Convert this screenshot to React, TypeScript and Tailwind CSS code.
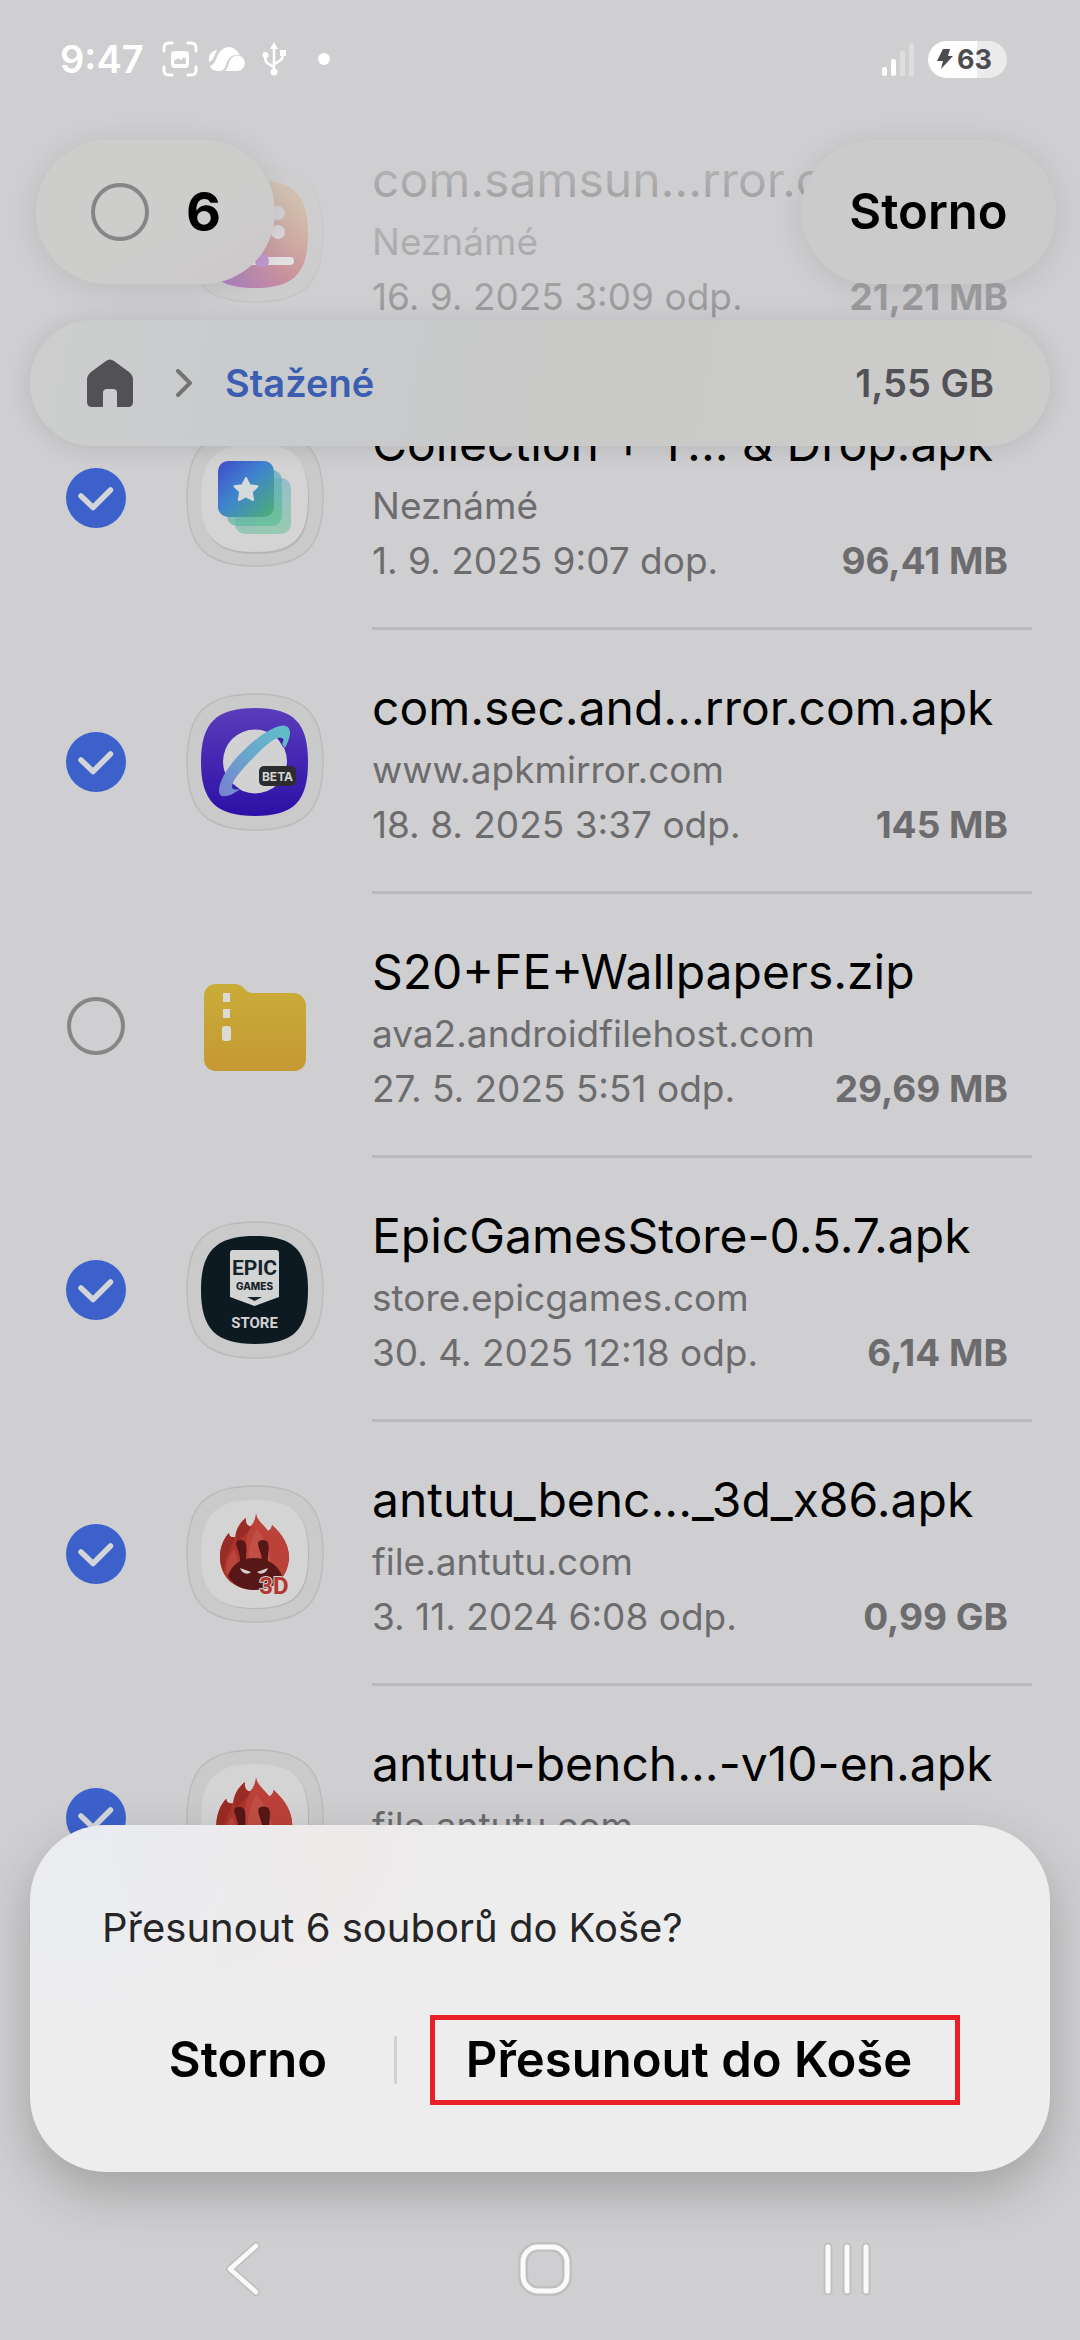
import React, { useState } from 'react';

type IconKind = 'goodlock' | 'collection' | 'browser' | 'zip' | 'epic' | 'antutu3d' | 'antutu';

interface FileItem {
  id: string;
  name: string;
  source: string;
  date: string;
  size: string;
  icon: IconKind;
  selected: boolean;
}

const FILES: FileItem[] = [
  { id: 'goodlock', name: 'com.samsun...rror.com.apk', source: 'Neznámé', date: '16. 9. 2025 3:09 odp.', size: '21,21 MB', icon: 'goodlock', selected: true },
  { id: 'collection', name: 'Collection + T... & Drop.apk', source: 'Neznámé', date: '1. 9. 2025 9:07 dop.', size: '96,41 MB', icon: 'collection', selected: true },
  { id: 'browser', name: 'com.sec.and...rror.com.apk', source: 'www.apkmirror.com', date: '18. 8. 2025 3:37 odp.', size: '145 MB', icon: 'browser', selected: true },
  { id: 'wallpapers', name: 'S20+FE+Wallpapers.zip', source: 'ava2.androidfilehost.com', date: '27. 5. 2025 5:51 odp.', size: '29,69 MB', icon: 'zip', selected: false },
  { id: 'epic', name: 'EpicGamesStore-0.5.7.apk', source: 'store.epicgames.com', date: '30. 4. 2025 12:18 odp.', size: '6,14 MB', icon: 'epic', selected: true },
  { id: 'antutu3d', name: 'antutu_benc..._3d_x86.apk', source: 'file.antutu.com', date: '3. 11. 2024 6:08 odp.', size: '0,99 GB', icon: 'antutu3d', selected: true },
  { id: 'antutu', name: 'antutu-bench...-v10-en.apk', source: 'file.antutu.com', date: '3. 11. 2024 6:05 odp.', size: '112 MB', icon: 'antutu', selected: true },
];

const OUTER = 'M69 1C118 1 137 20 137 69C137 118 118 137 69 137C20 137 1 118 1 69C1 20 20 1 69 1Z';
const INNER = 'M69 15C108 15 122 30 122 69C122 108 108 123 69 123C30 123 15 108 15 69C15 30 30 15 69 15Z';

function Flame() {
  return (
    <g>
      <path d="M70 28C70 35 78 40 82 46C84 45 86 43 86 40C97 50 103 60 103 73C102 93 88 105 69 105C49 105 34 93 34 72C34 62 38 53 43 48C43 51 45 53 49 52C50 44 54 37 60 33C59 38 62 42 65 41C68 38 70 33 70 28Z" fill="#ab342c" />
      <path d="M70 28C70 35 78 40 82 46C84 45 86 43 86 40C97 50 103 60 103 73C102 84 97 92 90 98L60 80C56 66 60 52 65 41C68 38 70 33 70 28Z" fill="#bb4139" />
      <path d="M43 48C43 51 45 53 49 52C46 62 38 72 38 86C35 82 34 77 34 72C34 62 38 53 43 48ZM60 33C59 38 62 42 65 41C63 48 56 51 52 57C48 49 53 38 60 33Z" fill="#992c25" />
      <path d="M70 44C76 50 82 58 84 70C85 76 84 80 82 82L64 78C60 66 66 54 70 44Z" fill="#c24f45" />
      <path d="M48 64C52 70 53 76 50 82L41 90C38 82 42 72 48 64Z" fill="#b9463c" />
      <path d="M50 58C51 54 59 54 60 59C61 65 60 70 60 77L54 79C55 69 51 64 50 58ZM72 58C73 54 81 54 82 58C84 64 81 70 82 79L76 77C76 68 72 64 72 58Z" fill="#571717" />
      <path d="M68 73C82 73 92 80 96 91C92 100 81 105 69 105C57 105 47 100 42 91C45 81 54 73 68 73Z" fill="#571717" />
      <path d="M54 83L65 87C62 90 56 89 54 83ZM82 83L71 87C74 90 80 89 82 83Z" fill="#d5cfcf" />
    </g>
  );
}

function FileIcon({ kind }: { kind: IconKind }) {
  if (kind === 'zip') {
    return (
      <svg viewBox="0 0 138 138" className="size-[138px] shrink-0" aria-hidden="true">
        <defs>
          <linearGradient id="zip" x1="0" y1="0" x2="0" y2="1">
            <stop offset="0" stopColor="#caac39" />
            <stop offset="1" stopColor="#c49933" />
          </linearGradient>
        </defs>
        <path d="M30 27H49C58 27 59 36 66 36H107C115 36 120 42 120 49V102C120 109 115 114 108 114H30C23 114 18 109 18 102V39C18 32 23 27 30 27Z" fill="url(#zip)" />
        <path d="M37 36H44V45H37ZM37 52H44V61H37Z" fill="#dadad6" />
        <rect x="36" y="69" width="9" height="15" rx="3" fill="#dadad6" />
      </svg>
    );
  }

  return (
    <svg viewBox="0 0 138 138" className="size-[138px] shrink-0" aria-hidden="true">
      <path d={OUTER} fill="#cacaca" stroke="#bbbbbc" strokeWidth="1.5" />
      {kind === 'goodlock' && (
        <g>
          <defs>
            <linearGradient id="goodlock" x1="0.1" y1="1" x2="0.9" y2="0.2">
              <stop offset="0" stopColor="#7d22cc" />
              <stop offset="0.5" stopColor="#c0405a" />
              <stop offset="1" stopColor="#d98a3a" />
            </linearGradient>
          </defs>
          <path d={INNER} fill="url(#goodlock)" />
          <circle cx="92" cy="48" r="7" fill="#e4dcdc" />
          <circle cx="92" cy="67" r="7" fill="#f4eeee" />
          <path d="M40 96H104" stroke="#ffffff" strokeWidth="8" strokeLinecap="round" />
          <circle cx="76" cy="96" r="7" fill="#b04ad0" />
        </g>
      )}
      {kind === 'collection' && (
        <g>
          <defs>
            <linearGradient id="stack" x1="0" y1="0" x2="1" y2="1">
              <stop offset="0" stopColor="#424bcb" />
              <stop offset="0.45" stopColor="#3f84cf" />
              <stop offset="1" stopColor="#4db070" />
            </linearGradient>
            <linearGradient id="stackBack" x1="0.3" y1="0" x2="0.7" y2="1">
              <stop offset="0" stopColor="#5b9fd0" />
              <stop offset="1" stopColor="#5bbf8f" />
            </linearGradient>
          </defs>
          <path d={INNER} transform="translate(1 2)" fill="#b5b5b5" />
          <path d={INNER} fill="#d4d4d4" />
          <rect x="49" y="49" width="56" height="56" rx="10" fill="url(#stackBack)" opacity="0.5" />
          <rect x="41" y="41" width="55" height="56" rx="10" fill="url(#stackBack)" opacity="0.7" />
          <rect x="32" y="32" width="56" height="56" rx="10" fill="url(#stack)" />
          <path d="M60 49L63.6 56.2L71.5 57.3L65.8 62.9L67.1 71L60 67.3L52.9 71L54.2 62.9L48.5 57.3L56.4 56.2Z" fill="#d5dadb" stroke="#d5dadb" strokeWidth="2" strokeLinejoin="round" />
        </g>
      )}
      {kind === 'browser' && (
        <g>
          <defs>
            <linearGradient id="browser" x1="0" y1="0" x2="0" y2="1">
              <stop offset="0" stopColor="#5a3cbb" />
              <stop offset="1" stopColor="#2c10a6" />
            </linearGradient>
            <linearGradient id="ring" x1="1" y1="0" x2="0" y2="1">
              <stop offset="0" stopColor="#5fc0c9" />
              <stop offset="0.5" stopColor="#6aa6cd" />
              <stop offset="1" stopColor="#7680cf" />
            </linearGradient>
          </defs>
          <path d={INNER} fill="url(#browser)" />
          <circle cx="69" cy="68.5" r="32" fill="#d2d2d3" />
          <path d="M91 44L97 54L99 45ZM46 90L56 98L46 98Z" fill="#3d22ae" />
          <path d="M33 98C33 86 46 68 58 57C72 43 88 33 97 32.5C106 33 106 42 99 55L96 51C99 46 97 44 92 45C84 47 72 60 64 68C54 79 46 88 46 94C46 97 51 97 54 96C46 103 33 107 33 98Z" fill="url(#ring)" />
          <rect x="73" y="73" width="37" height="20" rx="5" fill="#2d2d2f" />
          <text x="91.5" y="87.5" textAnchor="middle" fontFamily="Inter, sans-serif" fontWeight="700" fontSize="12" fill="#d6d6d6">BETA</text>
        </g>
      )}
      {kind === 'epic' && (
        <g>
          <path d={INNER} fill="#0e1a22" />
          <path d="M47 29H90Q93 29 93 32V76L68.500 85L44 76V32Q44 29 47 29Z" fill="#d2d3d3" />
          <text x="68.500" y="54" textAnchor="middle" fontFamily="'Liberation Sans Narrow', 'Roboto', sans-serif" fontWeight="700" fontSize="21" fill="#17232b">EPIC</text>
          <text x="68.500" y="69" textAnchor="middle" fontFamily="Inter, sans-serif" fontWeight="800" fontSize="10" fill="#17232b">GAMES</text>
          <path d="M61 76H76L68.500 80Z" fill="#17232b" />
          <text x="68.500" y="107" textAnchor="middle" fontFamily="'Liberation Sans Narrow', 'Roboto', sans-serif" fontWeight="700" fontSize="15" fill="#d2d3d3">STORE</text>
        </g>
      )}
      {(kind === 'antutu3d' || kind === 'antutu') && (
        <g>
          <path d={INNER} transform="translate(1 1)" fill="#b5b5b5" />
          <path d={INNER} fill="#d4d4d4" />
          {kind === 'antutu3d' ? (
            <g>
              <Flame />
              <text x="88" y="109" textAnchor="middle" fontFamily="'Roboto', sans-serif" fontWeight="700" fontSize="24" fill="#b5362e" stroke="#d4d4d4" strokeWidth="2" paintOrder="stroke">3D</text>
            </g>
          ) : (
            <g transform="translate(-7 -3) scale(1.1)">
              <Flame />
            </g>
          )}
        </g>
      )}
    </svg>
  );
}

function RoundCheckbox({ label, checked, onChange }: { label: string; checked: boolean; onChange: () => void }) {
  return (
    <label className="grid size-[60px] shrink-0 place-items-center">
      <input
        type="checkbox"
        aria-label={label}
        checked={checked}
        onChange={onChange}
        className="col-start-1 row-start-1 size-[58px] appearance-none rounded-full border-4 border-[#868687] checked:size-[60px] checked:border-0 checked:bg-[#3c61ca]"
      />
      {checked && (
        <svg viewBox="0 0 60 60" className="pointer-events-none col-start-1 row-start-1 size-[60px]" fill="none" aria-hidden="true">
          <path d="M15 28L27 39.500L44.500 22" stroke="#d3d5da" strokeWidth="5.5" strokeLinecap="round" strokeLinejoin="round" />
        </svg>
      )}
    </label>
  );
}

function StatusBar() {
  return (
    <div className="flex h-[118px] items-center justify-between pr-[73px] pl-[60px] text-white">
      <div className="flex items-center">
        <span className="text-[38px] leading-none font-semibold">9:47</span>
        <svg viewBox="0 0 36 36" className="ml-[18px] size-9" fill="none" aria-hidden="true">
          <path d="M2 10V7Q2 2 7 2H10M26 2H29Q34 2 34 7V10M34 26V29Q34 34 29 34H26M10 34H7Q2 34 2 29V26" stroke="white" strokeWidth="3" strokeLinecap="round" />
          <rect x="9" y="10" width="18" height="17" rx="4" fill="white" />
          <path d="M12 23V20L16 17L19 19L22 16L24 18V23Z" fill="#cfcfd1" />
        </svg>
        <svg viewBox="0 0 38 26" className="ml-[10px] h-[26px] w-[38px]" aria-hidden="true">
          <path d="M1 16C0 9 3 5 9 4L5 13Q3 16 1 16Z" fill="white" />
          <path d="M2 20C8 18 8 11 11 7C15 0 23 -1 28 4C30 6 31 8 32 9C24 8 20 12 18 19Q16 25 12 25C6 25 3 24 2 20Z" fill="white" />
          <path d="M17 25C20 23 20 18 22 14C25 9 31 8 35 12C39 17 36 25 29 25Z" fill="white" />
        </svg>
        <svg viewBox="0 0 24 34" className="ml-4 h-[34px] w-6" fill="none" aria-hidden="true">
          <path d="M12 6V30M12 25C4 21 3 20 3 13M12 22C20 18 21 17 21 10" stroke="white" strokeWidth="2.500" />
          <path d="M12 0L16 7H8Z" fill="white" />
          <circle cx="12" cy="30" r="3.500" fill="white" />
          <circle cx="3.500" cy="13" r="3" fill="white" />
          <rect x="18" y="8" width="6" height="6" fill="white" />
        </svg>
        <span className="ml-8 size-3 rounded-full bg-white" />
      </div>
      <div className="flex items-center gap-[14px]">
        <div className="flex h-[34px] items-end gap-1">
          <span className="h-[9px] w-[5px] rounded-full bg-white" />
          <span className="h-[17px] w-[5px] rounded-full bg-white" />
          <span className="h-[25px] w-[5px] rounded-full bg-[#dededf]" />
          <span className="h-[33px] w-[5px] rounded-full bg-[#dededf]" />
        </div>
        <div className="flex h-[37px] w-[79px] items-center gap-1 rounded-full bg-linear-to-r from-white from-62% to-[#ebebeb] to-62% pl-[9px] text-[#4c4c50]">
          <svg viewBox="0 0 16 20" className="h-5 w-4" aria-hidden="true">
            <path d="M6 0H13L11 7H16L4 20L6 12H0Z" fill="currentColor" />
          </svg>
          <span className="text-[27px] leading-none font-bold">63</span>
        </div>
      </div>
    </div>
  );
}

export default function App() {
  const [files, setFiles] = useState(FILES);
  const count = files.filter(f => f.selected).length;
  const allSelected = count === files.length;

  const toggle = (id: string) => {
    setFiles(files.map(f => (f.id === id ? { ...f, selected: !f.selected } : f)));
  };

  return (
    <div className="relative min-h-screen overflow-hidden bg-[#cfcfd1] font-['Inter','Noto_Sans',sans-serif] text-black">
      <ul className="pt-[102px]">
        {files.map(file => (
          <li key={file.id} className="flex h-[264px] pr-12 pl-[66px]">
            <div className="flex items-center gap-[60px] pr-12">
              <RoundCheckbox label={file.name} checked={file.selected} onChange={() => toggle(file.id)} />
              <FileIcon kind={file.icon} />
            </div>
            <div className="min-w-0 flex-1 border-b-[3px] border-[#b9b9bb] pt-12 pr-6 text-[37px] leading-[55px] whitespace-nowrap text-[#6c6c6e]">
              <p className="mb-1 text-[48px] leading-[60px] text-black">{file.name}</p>
              <p>{file.source}</p>
              <div className="flex justify-between">
                <span>{file.date}</span>
                <span className="font-bold">{file.size}</span>
              </div>
            </div>
          </li>
        ))}
      </ul>

      {/* Floating header over the scrolled list */}
      <header className="absolute inset-x-0 top-0 bg-[linear-gradient(to_bottom,#cfcfd1_22%,#cfcfd1d6_40%,#cfcfd180_67%,#cfcfd100_100%)]">
        <StatusBar />
        <div className="mt-[22px] flex justify-between pr-6 pl-9">
          <div className="flex h-36 w-[239px] items-center gap-9 rounded-full bg-linear-to-br from-[#cdcdcc] from-60% to-[#cdc8cb] pl-[54px] shadow-[0_4px_30px_rgba(0,0,0,0.1)]">
            <RoundCheckbox
              label="Vybrat vše"
              checked={allSelected}
              onChange={() => setFiles(files.map(f => ({ ...f, selected: !allSelected })))}
            />
            <span className="text-[54px] leading-none font-bold">{count}</span>
          </div>
          <button className="h-36 w-[255px] rounded-full bg-[#cbcbcb] text-[49px] font-semibold shadow-[0_4px_30px_rgba(0,0,0,0.1)]">
            Storno
          </button>
        </div>
        <nav className="mx-[30px] mt-9 flex h-[126px] items-center rounded-full bg-[linear-gradient(100deg,#cdcecd_0%,#c8cbce_25%,#c9c9c8_50%,#cccccb_100%)] pr-14 pl-[57px] text-[38px] shadow-[0_2px_24px_rgba(0,0,0,0.12)]">
          <a href="#home" aria-label="Domů">
            <svg viewBox="0 0 46 48" className="h-12 w-[46px]" aria-hidden="true">
              <path d="M19 2Q23 -1 27 2L42 13Q46 16 46 21V43Q46 48 41 48H30V34Q30 30 26 30H20Q16 30 16 34V48H5Q0 48 0 43V21Q0 16 4 13Z" fill="#525156" />
            </svg>
          </a>
          <svg viewBox="0 0 18 28" className="mr-[32px] ml-[42px] h-7 w-[18px]" fill="none" aria-hidden="true">
            <path d="M3 2L15 14L3 26" stroke="#747475" strokeWidth="4" strokeLinecap="round" strokeLinejoin="round" />
          </svg>
          <a href="#downloads" className="font-semibold text-[#3b5db2]">Stažené</a>
          <span className="ml-auto font-semibold text-[#525156]">1,55 GB</span>
        </nav>
      </header>

      <div className="absolute inset-x-0 bottom-0">
        <section
          role="dialog"
          aria-labelledby="confirm-title"
          className="mx-[30px] rounded-[76px] bg-[#ededed] bg-[radial-gradient(circle_at_6%_0%,#eaecf1_0%,transparent_24%),radial-gradient(circle_at_24%_0%,#eeeae9_0%,transparent_28%)] px-[72px] pt-[76px] pb-[67px] shadow-[0_20px_50px_rgba(0,0,0,0.22)]"
        >
          <h2 id="confirm-title" className="text-[40px] leading-[54px] text-[#252528]">
            Přesunout {count} souborů do Koše?
          </h2>
          <div className="mt-[60px] flex items-center text-[49px] font-semibold">
            <button className="w-1/3">Storno</button>
            <span className="h-12 w-[3px] bg-[#d2d2d3]" />
            <div className="flex flex-1 pr-[18px] pl-[33px]">
              <button className="h-[90px] flex-1 border-[5px] border-[#ea1f27] pr-3 whitespace-nowrap">Přesunout do Koše</button>
            </div>
          </div>
        </section>

        <nav className="mt-[26px] flex h-[142px] items-center pr-[82px] pl-[92px]">
          <button className="flex flex-1 justify-center" aria-label="Zpět">
            <svg viewBox="0 0 56 56" className="size-14" fill="none" strokeLinecap="round" strokeLinejoin="round" aria-hidden="true">
              <path d="M41 5L15 28L41 51" stroke="#c0c0c1" strokeWidth="8" />
              <path d="M41 5L15 28L41 51" stroke="#fafafa" strokeWidth="4.500" />
            </svg>
          </button>
          <button className="flex flex-1 justify-center" aria-label="Domovská obrazovka">
            <svg viewBox="0 0 56 56" className="size-14" fill="none" aria-hidden="true">
              <rect x="6" y="6" width="44" height="44" rx="15" stroke="#c0c0c1" strokeWidth="10" />
              <rect x="6" y="6" width="44" height="44" rx="15" stroke="#fafafa" strokeWidth="5" />
            </svg>
          </button>
          <button className="flex flex-1 justify-center" aria-label="Poslední aplikace">
            <svg viewBox="0 0 56 56" className="size-14" strokeLinecap="round" aria-hidden="true">
              <path d="M9 6V50M28 6V50M47 6V50" stroke="#c0c0c1" strokeWidth="9" />
              <path d="M9 6V50M28 6V50M47 6V50" stroke="#fafafa" strokeWidth="5" />
            </svg>
          </button>
        </nav>
      </div>
    </div>
  );
}
